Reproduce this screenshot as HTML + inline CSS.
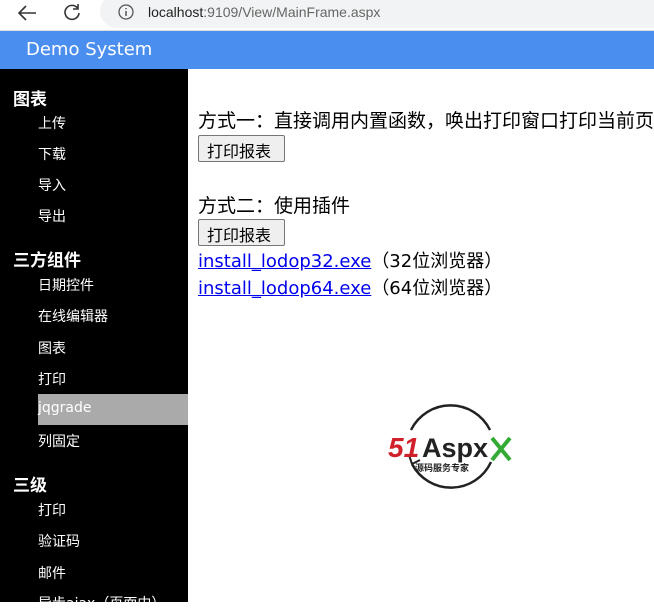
<!DOCTYPE html>
<html><head><meta charset="utf-8"><style>
*{margin:0;padding:0;box-sizing:border-box}
body{width:654px;height:602px;overflow:hidden;background:#fff;font-family:"DejaVu Sans","Noto Sans CJK SC",sans-serif;position:relative}
.a{position:absolute;white-space:nowrap}
.bar{position:absolute;left:0;top:0;width:654px;height:31px;background:#fff;border-bottom:1px solid #ddd}
.url{position:absolute;left:100px;top:-6px;width:600px;height:34px;background:#f1f3f4;border-radius:17px}
.hdr{position:absolute;left:0;top:31px;width:654px;height:38px;background:#4a8ff0;color:#fff;font-size:18px;padding:8px 0 0 26px}
.side{position:absolute;left:0;top:69px;width:188px;height:533px;background:#000}
.h{color:#fff;font-weight:bold;font-size:17px;left:13px}
.i{color:#fff;font-size:14px;left:38px}
.c{font-size:18px;color:#000;left:198px}
.btn{position:absolute;left:198px;width:87px;height:27px;border:1px solid #767676;border-radius:2px;background:#efefef;font-size:16px;padding:2px 0 0 8px;white-space:nowrap}
a{color:#00e;text-decoration:underline}
</style></head><body>
<div class="bar"><div class="url"></div>
<svg class="a" style="left:16px;top:3px" width="22" height="20"><path d="M20 10H3M10 3L3 10L10 17" stroke="#333" stroke-width="1.6" fill="none"/></svg>
<svg class="a" style="left:62px;top:2px" width="20" height="20"><path d="M15.5 6A7 7 0 1 0 17 11" stroke="#333" stroke-width="1.6" fill="none"/><path d="M16 2V7H11" stroke="#333" stroke-width="1.6" fill="none"/></svg>
<svg class="a" style="left:117px;top:3px" width="18" height="18"><circle cx="9" cy="9" r="7" stroke="#555" stroke-width="1.3" fill="none"/><path d="M9 8V13M9 5V6.3" stroke="#555" stroke-width="1.5"/></svg>
<div class="a" style="left:148px;top:4px;font-size:14px;color:#222;font-family:'Liberation Sans',sans-serif">localhost<span style="color:#666">:9109/View/MainFrame.aspx</span></div>
</div>
<div class="hdr">Demo System</div>
<div class="side">
<div class="a" style="left:38px;top:325px;width:150px;height:31px;background:#aaa"></div>
</div>
<div class="a h" style="top:85px">图表</div>
<div class="a i" style="top:113px">上传</div>
<div class="a i" style="top:144px">下载</div>
<div class="a i" style="top:175px">导入</div>
<div class="a i" style="top:206px">导出</div>
<div class="a h" style="top:246px">三方组件</div>
<div class="a i" style="top:275px">日期控件</div>
<div class="a i" style="top:306px">在线编辑器</div>
<div class="a i" style="top:338px">图表</div>
<div class="a i" style="top:369px">打印</div>
<div class="a i" style="top:400px">jqgrade</div>
<div class="a i" style="top:431px">列固定</div>
<div class="a h" style="top:471px">三级</div>
<div class="a i" style="top:500px">打印</div>
<div class="a i" style="top:531px">验证码</div>
<div class="a i" style="top:563px">邮件</div>
<div class="a i" style="top:593px">异步ajax（页面中）</div>
<div class="a c" style="top:106px;font-size:19px">方式一：直接调用内置函数，唤出打印窗口打印当前页面</div>
<div class="btn" style="top:135px">打印报表</div>
<div class="a c" style="top:191px;font-size:19px">方式二：使用插件</div>
<div class="btn" style="top:219px">打印报表</div>
<div class="a c" style="top:247px"><a>install_lodop32.exe</a>（32位浏览器）</div>
<div class="a c" style="top:274px"><a>install_lodop64.exe</a>（64位浏览器）</div>
<svg class="a" style="left:385px;top:400px" width="130" height="95">
<path d="M26 30A44 44 0 0 1 105 30" stroke="#222" stroke-width="2.5" fill="none"/>
<path d="M106 62A44 44 0 0 1 27 64" stroke="#222" stroke-width="2.5" fill="none"/>
<path d="M27 64L24 55M27 64L35 60" stroke="#222" stroke-width="2" fill="none"/>
<text x="3" y="57" font-family="Liberation Sans" font-weight="bold" font-style="italic" font-size="28" fill="#d0202a">51</text>
<text x="37" y="57" font-family="Liberation Sans" font-weight="bold" font-size="27" fill="#222">Aspx</text>
<path d="M107 38L125 60M125 38L107 60" stroke="#3a3" stroke-width="4"/>
<text x="30" y="71" font-family="Noto Sans CJK SC" font-size="9" font-weight="bold" fill="#222">源码服务专家</text>
</svg>
</body></html>
